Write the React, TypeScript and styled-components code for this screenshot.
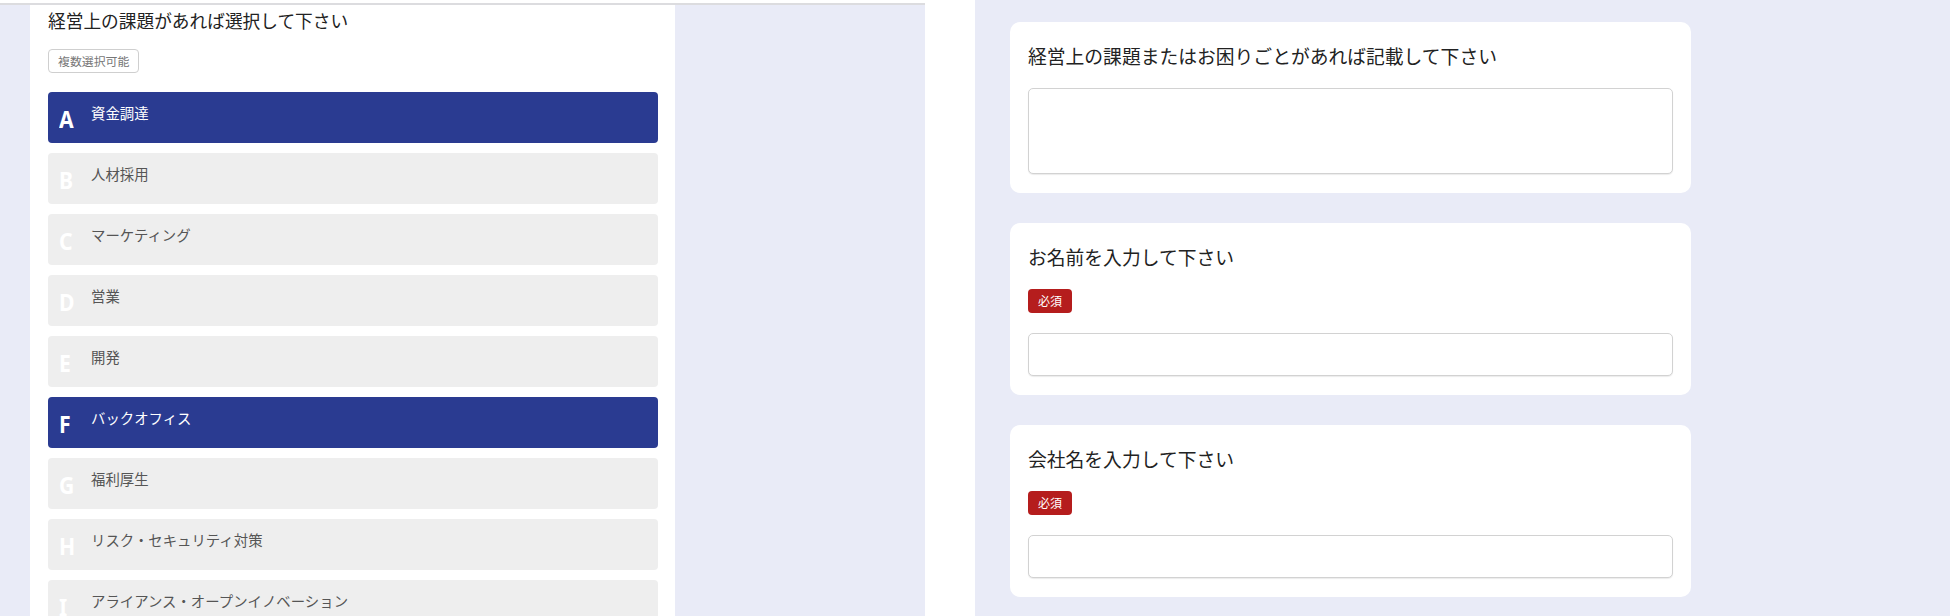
import React from "react";
import styled, { createGlobalStyle } from "styled-components";

const GlobalStyle = createGlobalStyle`
  html, body { margin: 0; padding: 0; background: #ffffff; }
  body {
    font-family: "Noto Sans", "Noto Sans CJK JP", sans-serif;
    color: #222;
    overflow: hidden;
  }
  * { box-sizing: border-box; }
`;

const Page = styled.div`
  display: flex;
  width: 1950px;
  height: 616px;
  overflow: hidden;
`;

const LeftPanel = styled.section`
  width: 925px;
  flex: none;
  margin-top: 3px;
  border-top: 2px solid #dcdcdf;
  background: #e9ebf7;
  padding-left: 30px;
  overflow: hidden;
`;

const Divider = styled.div`
  width: 50px;
  flex: none;
  background: #ffffff;
`;

const RightPanel = styled.section`
  flex: 1;
  background: #e9ebf7;
  padding: 22px 0 0 35px;
  display: flex;
  flex-direction: column;
  gap: 30px;
`;

const QuestionCard = styled.div`
  width: 645px;
  min-height: 700px;
  background: #ffffff;
  padding: 2px 17px 0 18px;
`;

const QuestionTitle = styled.h2`
  margin: 0;
  font-family: "Noto Sans CJK JP", sans-serif;
  font-size: 17.7px;
  font-weight: 400;
  line-height: 26px;
  color: #222;
`;

const MultiBadge = styled.span`
  display: inline-block;
  margin-top: 16px;
  height: 24px;
  padding: 0 9px;
  border: 1px solid #cfcfcf;
  border-radius: 4px;
  font-family: "Noto Sans CJK JP", sans-serif;
  font-size: 11.9px;
  line-height: 22px;
  color: #777;
`;

const OptionList = styled.ul`
  list-style: none;
  margin: 19px 0 0;
  padding: 0;
  display: flex;
  flex-direction: column;
  gap: 10px;
`;

const Option = styled.li<{ $selected: boolean }>`
  display: flex;
  align-items: flex-start;
  height: 51px;
  padding: 0 11px;
  border-radius: 4px;
  background: ${(p) => (p.$selected ? "#2a3b91" : "#eeeeee")};
  color: ${(p) => (p.$selected ? "#ffffff" : "#555555")};
`;

const OptionKey = styled.span`
  width: 32px;
  flex: none;
  margin-top: 15px;
  font-family: "Noto Sans", sans-serif;
  font-weight: 700;
  font-size: 23.5px;
  line-height: 24px;
  color: #ffffff;
  transform: scaleX(0.9);
  transform-origin: left center;
`;

const OptionLabel = styled.span`
  margin-top: 10px;
  font-family: "Noto Sans CJK JP", sans-serif;
  font-size: 14.4px;
  line-height: 22px;
`;

const FormCard = styled.div`
  width: 681px;
  background: #ffffff;
  border-radius: 10px;
  padding: 20px 18px 19px 18px;
  display: flex;
  flex-direction: column;
  align-items: flex-start;
`;

const FormTitle = styled.h3`
  margin: 0;
  font-family: "Noto Sans CJK JP", sans-serif;
  font-size: 18.8px;
  font-weight: 400;
  line-height: 28px;
  color: #222;
`;

const RequiredBadge = styled.span`
  margin-top: 18px;
  height: 24px;
  padding: 0 10px;
  border-radius: 4px;
  background: #b51d1d;
  color: #ffffff;
  font-family: "Noto Sans CJK JP", sans-serif;
  font-size: 12px;
  line-height: 24px;
`;

const TextArea = styled.textarea`
  display: block;
  width: 100%;
  height: 86px;
  margin-top: 18px;
  border: 1px solid #d2d2d2;
  border-radius: 5px;
  box-shadow: 0 1px 1px rgba(0, 0, 0, 0.08);
  resize: none;
  background: #fff;
  font-family: "Noto Sans CJK JP", sans-serif;
`;

const TextInput = styled.input`
  display: block;
  width: 100%;
  height: 43px;
  margin-top: 20px;
  border: 1px solid #d2d2d2;
  border-radius: 5px;
  box-shadow: 0 1px 1px rgba(0, 0, 0, 0.08);
  background: #fff;
  font-family: "Noto Sans CJK JP", sans-serif;
`;

const options = [
  { key: "A", label: "資金調達", selected: true },
  { key: "B", label: "人材採用", selected: false },
  { key: "C", label: "マーケティング", selected: false },
  { key: "D", label: "営業", selected: false },
  { key: "E", label: "開発", selected: false },
  { key: "F", label: "バックオフィス", selected: true },
  { key: "G", label: "福利厚生", selected: false },
  { key: "H", label: "リスク・セキュリティ対策", selected: false },
  { key: "I", label: "アライアンス・オープンイノベーション", selected: false },
];

export default function App() {
  return (
    <>
      <GlobalStyle />
      <Page>
        <LeftPanel>
          <QuestionCard>
            <QuestionTitle>経営上の課題があれば選択して下さい</QuestionTitle>
            <MultiBadge>複数選択可能</MultiBadge>
            <OptionList>
              {options.map((o) => (
                <Option key={o.key} $selected={o.selected}>
                  <OptionKey>{o.key}</OptionKey>
                  <OptionLabel>{o.label}</OptionLabel>
                </Option>
              ))}
            </OptionList>
          </QuestionCard>
        </LeftPanel>
        <Divider />
        <RightPanel>
          <FormCard>
            <FormTitle>経営上の課題またはお困りごとがあれば記載して下さい</FormTitle>
            <TextArea />
          </FormCard>
          <FormCard>
            <FormTitle>お名前を入力して下さい</FormTitle>
            <RequiredBadge>必須</RequiredBadge>
            <TextInput type="text" />
          </FormCard>
          <FormCard>
            <FormTitle>会社名を入力して下さい</FormTitle>
            <RequiredBadge>必須</RequiredBadge>
            <TextInput type="text" />
          </FormCard>
        </RightPanel>
      </Page>
    </>
  );
}
